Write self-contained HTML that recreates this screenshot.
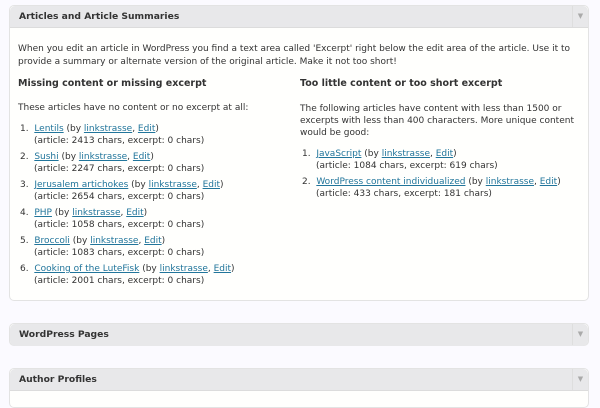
<!DOCTYPE html>
<html><head><style>
*{margin:0;padding:0;box-sizing:border-box}
body{width:600px;height:400px;background:#fbfaff;font-family:"DejaVu Sans","Liberation Sans",sans-serif;font-size:9px;color:#333;position:relative;overflow:hidden}
.box{position:absolute;left:9px;width:580px;border:1px solid #e3e3e3;border-radius:5px;background:#fffffd}
.hd{height:22px;background:#e8e8ea;border-bottom:1px solid #dcdcdc;border-radius:5px 5px 0 0;font-weight:bold;font-size:9.2px;line-height:21px;padding-left:9px;color:#333;position:relative}
.hd .t{position:absolute;right:0;top:0;width:16px;height:21px;border-left:1px solid #dedede;color:#aaa;font-size:7px;text-align:center;line-height:21px}
.a{position:absolute;white-space:nowrap;line-height:12px}
a{color:#21759b;text-decoration:underline}
b{font-size:9.5px}
</style></head><body>
<div class="box" style="top:5px;height:296px">
<div class="hd">Articles and Article Summaries<span class="t">▼</span></div>
</div>
<div class="a" style="left:18px;top:43px;line-height:13px">When you edit an article in WordPress you find a text area called 'Excerpt' right below the edit area of the article. Use it to<br>provide a summary or alternate version of the original article. Make it not too short!</div>
<div class="a" style="left:18px;top:78px"><b>Missing content or missing excerpt</b></div>
<div class="a" style="left:18px;top:102px">These articles have no content or no excerpt at all:</div>
<div class="a" style="left:20px;top:123px;line-height:12px">
<div>1.&nbsp; <a>Lentils</a> (by <a>linkstrasse</a>, <a>Edit</a>)<br><span style="padding-left:14px">(article: 2413 chars, excerpt: 0 chars)</span></div>
<div style="margin-top:4px">2.&nbsp; <a>Sushi</a> (by <a>linkstrasse</a>, <a>Edit</a>)<br><span style="padding-left:14px">(article: 2247 chars, excerpt: 0 chars)</span></div>
<div style="margin-top:4px">3.&nbsp; <a>Jerusalem artichokes</a> (by <a>linkstrasse</a>, <a>Edit</a>)<br><span style="padding-left:14px">(article: 2654 chars, excerpt: 0 chars)</span></div>
<div style="margin-top:4px">4.&nbsp; <a>PHP</a> (by <a>linkstrasse</a>, <a>Edit</a>)<br><span style="padding-left:14px">(article: 1058 chars, excerpt: 0 chars)</span></div>
<div style="margin-top:4px">5.&nbsp; <a>Broccoli</a> (by <a>linkstrasse</a>, <a>Edit</a>)<br><span style="padding-left:14px">(article: 1083 chars, excerpt: 0 chars)</span></div>
<div style="margin-top:4px">6.&nbsp; <a>Cooking of the LuteFisk</a> (by <a>linkstrasse</a>, <a>Edit</a>)<br><span style="padding-left:14px">(article: 2001 chars, excerpt: 0 chars)</span></div>
</div>
<div class="a" style="left:300px;top:78px"><b>Too little content or too short excerpt</b></div>
<div class="a" style="left:300px;top:103px">The following articles have content with less than 1500 or<br>excerpts with less than 400 characters. More unique content<br>would be good:</div>
<div class="a" style="left:302px;top:148px">
<div>1.&nbsp; <a>JavaScript</a> (by <a>linkstrasse</a>, <a>Edit</a>)<br><span style="padding-left:14px">(article: 1084 chars, excerpt: 619 chars)</span></div>
<div style="margin-top:4px">2.&nbsp; <a>WordPress content individualized</a> (by <a>linkstrasse</a>, <a>Edit</a>)<br><span style="padding-left:14px">(article: 433 chars, excerpt: 181 chars)</span></div>
</div>
<div class="box" style="top:323px;height:23px;border-radius:5px">
<div class="hd" style="border-radius:5px;border-bottom:none">WordPress Pages<span class="t">▼</span></div>
</div>
<div class="box" style="top:368px;height:40px">
<div class="hd">Author Profiles<span class="t">▼</span></div>
</div>
</body></html>
